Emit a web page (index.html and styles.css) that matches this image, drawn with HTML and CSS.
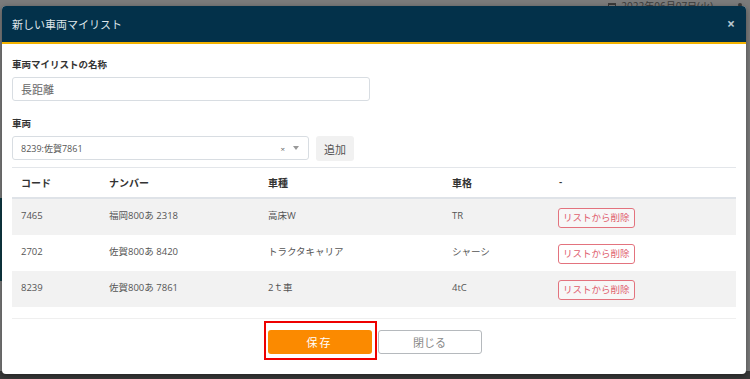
FILE: index.html
```html
<!DOCTYPE html>
<html lang="ja">
<head>
  <meta charset="UTF-8" />
  <title>新しい車両マイリスト</title>
  <link rel="stylesheet" href="styles.css">
</head>
<body>
  <!-- 背景のページ -->
  <div class="page">
    <div class="topbar">
      <span class="cal">
        <svg width="8" height="7" viewBox="0 0 8 7"><rect x="0.5" y="0.5" width="7" height="6" fill="none" stroke="#3a3a3a"/><rect x="0" y="0" width="8" height="2" fill="#3a3a3a"/></svg>
      </span>
      <span class="date">2022年06月07日(火)</span>
      <span class="user">
        <svg width="8" height="7" viewBox="0 0 8 7"><circle cx="4" cy="2" r="2" fill="#3a3a3a"/><rect x="1" y="4" width="6" height="3" rx="1" fill="#3a3a3a"/></svg>
      </span>
    </div>
    <div class="side"></div>
    <div class="bottombar"></div>
  </div>

  <!-- モーダル -->
  <div class="modal">
    <div class="modal-header">
      <h1>新しい車両マイリスト</h1>
      <span class="close">&times;</span>
    </div>

    <div class="modal-body">
      <label class="field-label">車両マイリストの名称</label>
      <div class="input name-input">長距離</div>

      <label class="field-label">車両</label>
      <div class="select-row">
        <div class="input select">
          <span class="select-value">8239:佐賀7861</span>
          <span class="select-clear">×</span>
          <span class="select-arrow"></span>
        </div>
        <button class="btn-add">追加</button>
      </div>

      <table class="vehicles">
        <colgroup>
          <col style="width: 88px">
          <col style="width: 159px">
          <col style="width: 184px">
          <col style="width: 107px">
          <col>
        </colgroup>
        <thead>
          <tr>
            <th>コード</th>
            <th>ナンバー</th>
            <th>車種</th>
            <th>車格</th>
            <th>-</th>
          </tr>
        </thead>
        <tbody>
          <tr>
            <td>7465</td>
            <td>福岡800あ 2318</td>
            <td>高床W</td>
            <td>TR</td>
            <td><button class="btn-remove">リストから削除</button></td>
          </tr>
          <tr>
            <td>2702</td>
            <td>佐賀800あ 8420</td>
            <td>トラクタキャリア</td>
            <td>シャーシ</td>
            <td><button class="btn-remove">リストから削除</button></td>
          </tr>
          <tr>
            <td>8239</td>
            <td>佐賀800あ 7861</td>
            <td>2ｔ車</td>
            <td>4tC</td>
            <td><button class="btn-remove">リストから削除</button></td>
          </tr>
        </tbody>
      </table>
    </div>

    <div class="modal-footer">
      <span class="highlight"><button class="btn-save">保存</button></span>
      <button class="btn-close">閉じる</button>
    </div>
  </div>
</body>
</html>
```

FILE: styles.css
```css
* {
  box-sizing: border-box;
  font-family: 'Open Sans', 'Noto Sans CJK JP', sans-serif;
}

body {
  margin: 0;
  width: 750px;
  height: 379px;
  overflow: hidden;
  background: #7b7b7b;
  position: relative;
}

/* 背景 */
.page {
  height: 100%;
  display: flex;
  flex-direction: column;
}

.topbar {
  height: 8px;
  display: flex;
  align-items: flex-start;
  justify-content: flex-end;
  gap: 5px;
  padding-right: 6px;
  font-size: 10px;
  line-height: 12px;
  color: #3a3a3a;
}

.topbar .date { margin-right: 18px; }

.side {
  flex: 1;
  width: 3px;
  margin-top: 190px;
  margin-bottom: 90px;
  background: #0e3a44;
}

.bottombar {
  height: 8px;
  background: #3a3a3a;
}

/* モーダル */
.modal {
  position: absolute;
  top: 6px;
  left: 2px;
  width: 744px;
  height: 368px;
  background: #fff;
  border-radius: 4px;
  overflow: hidden;
  display: flex;
  flex-direction: column;
  box-shadow: 0 2px 6px rgba(0,0,0,0.4);
}

.modal-header {
  height: 38px;
  background: #03314a;
  border-bottom: 2px solid #f2b200;
  display: flex;
  align-items: center;
  justify-content: space-between;
  padding: 0 11px 0 10px;
}

.modal-header h1 {
  margin: 0;
  font-size: 11px;
  font-weight: normal;
  color: #dfe6eb;
}

.close {
  font-size: 14px;
  font-weight: bold;
  color: #b8c6cf;
  line-height: 1;
}

.modal-body {
  padding: 14px 10px 0 10px;
}

.field-label {
  display: block;
  font-size: 9.5px;
  font-weight: bold;
  color: #333;
  line-height: 14px;
  margin-bottom: 5px;
}

.input {
  height: 24px;
  border: 1px solid #d8dde2;
  border-radius: 3px;
  padding: 0 8px;
  display: flex;
  align-items: center;
  color: #555;
}

.name-input {
  width: 358px;
  font-size: 11px;
  color: #666;
  margin-bottom: 16px;
}

.select-row {
  display: flex;
  gap: 7px;
  margin-bottom: 6px;
}

.select {
  width: 297px;
  font-size: 9px;
}

.select-value { flex: 1; }

.select-clear {
  font-size: 8px;
  color: #666;
  margin-right: 8px;
}

.select-arrow {
  width: 0;
  height: 0;
  border-left: 3px solid transparent;
  border-right: 3px solid transparent;
  border-top: 4px solid #999;
  margin-right: 1px;
}

.btn-add {
  width: 38px;
  height: 25px;
  border: none;
  border-radius: 3px;
  background: #f1f1f1;
  color: #555;
  font-size: 11px;
  padding: 0;
}

/* 一覧 */
.vehicles {
  width: 100%;
  table-layout: fixed;
  border-collapse: collapse;
  border-top: 1px solid #e3e6ea;
}

.vehicles th {
  height: 30px;
  text-align: left;
  font-size: 10px;
  font-weight: 600;
  color: #333;
  padding: 0 9px;
  border-bottom: 2px solid #dfe3e8;
}

.vehicles td {
  height: 36px;
  vertical-align: top;
  padding: 9px 9px 0 9px;
  font-size: 9.5px;
  line-height: 16px;
  color: #555;
}

.vehicles tbody tr:nth-child(odd) td { background: #f2f2f2; }
.vehicles tbody tr:first-child td { height: 37px; }

.vehicles td:last-child { padding-left: 8px; }

.btn-remove {
  height: 20px;
  padding: 0 4px;
  background: #fff;
  border: 1px solid #e3737e;
  border-radius: 3px;
  color: #e0606e;
  font-size: 9.5px;
  line-height: 18px;
}

.vehicles tbody tr:nth-child(odd) .btn-remove {
  background: #f7f7f7;
}

/* フッター */
.modal-footer {
  margin: 11px 10px 0 10px;
  border-top: 1px solid #efefef;
  display: flex;
  justify-content: center;
  align-items: flex-start;
  padding-top: 2px;
  padding-right: 3px;
}

.highlight {
  display: flex;
  border: 2px solid #ee0000;
  padding: 7px 3px 4px 2px;
}

.btn-save {
  width: 104px;
  height: 24px;
  border: none;
  border-radius: 3px;
  background: #fb8a00;
  color: #fff;
  font-size: 11px;
  letter-spacing: 2px;
  padding: 0;
}

.btn-close {
  width: 104px;
  height: 24px;
  margin-top: 9px;
  margin-left: 1px;
  border: 1px solid #b5b9bd;
  border-radius: 3px;
  background: #fff;
  color: #888;
  font-size: 11px;
  padding: 0;
}
```
